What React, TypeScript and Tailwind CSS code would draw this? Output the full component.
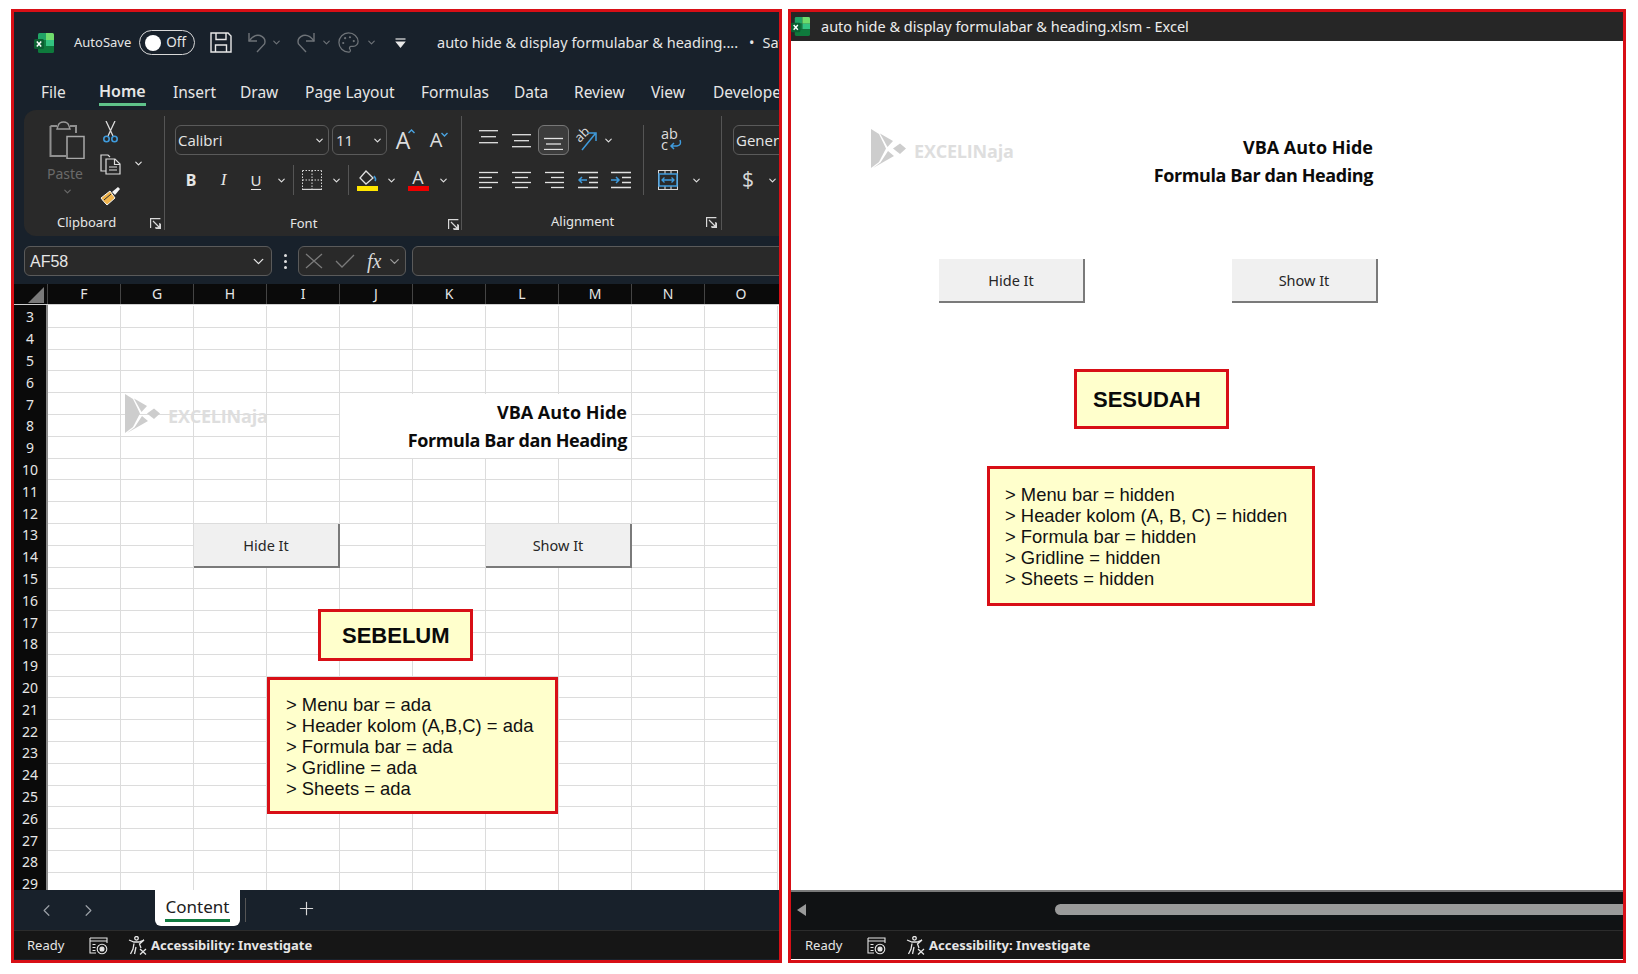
import { ChevronDown, ChevronLeft, ChevronRight, Plus, Palette } from "lucide-react";
import type { ReactNode } from "react";

const COLUMNS = ["F", "G", "H", "I", "J", "K", "L", "M", "N", "O"];
const ROWS = Array.from({ length: 27 }, (_, i) => i + 3);
const MENU = [
  { label: "File", w: "w-[58px]" },
  { label: "Home", w: "w-[74px]" },
  { label: "Insert", w: "w-[67px]" },
  { label: "Draw", w: "w-[65px]" },
  { label: "Page Layout", w: "w-[116px]" },
  { label: "Formulas", w: "w-[93px]" },
  { label: "Data", w: "w-[60px]" },
  { label: "Review", w: "w-[77px]" },
  { label: "View", w: "w-[62px]" },
  { label: "Developer", w: "w-[100px]" },
];

function Chev({ w = "w-[16px]", className = "text-[#e0e0e0]" }: { w?: string; className?: string }) {
  return (
    <div className={`${w} flex shrink-0 justify-center ${className}`}>
      <ChevronDown size={11} strokeWidth={2.5} />
    </div>
  );
}

function Slot({ w, children }: { w: string; children: ReactNode }) {
  return <div className={`${w} flex h-full shrink-0 items-center justify-center`}>{children}</div>;
}

function Sep({ w }: { w: string }) {
  return (
    <div className={`${w} flex shrink-0 justify-center`}>
      <div className="h-[30px] w-px bg-[#555555]" />
    </div>
  );
}

function ExcelLogo({ size = 20 }: { size?: number }) {
  return (
    <svg width={size} height={size} viewBox="0 0 20 20">
      <path d="M4 1.5 Q4 0 5.5 0 H12 V7 H4 Z" fill="#21a366" />
      <path d="M12 0 H18.5 Q20 0 20 1.5 V7 H12 Z" fill="#6fdc6c" />
      <path d="M4 7 H12 V13 H4 Z" fill="#107c41" />
      <path d="M12 7 H20 V13 H12 Z" fill="#33c481" />
      <path d="M4 13 H20 V18.5 Q20 20 18.5 20 H5.5 Q4 20 4 18.5 Z" fill="#0e7a3c" />
      <rect x="0" y="6" width="10" height="10" rx="1.5" fill="#0b5f31" />
      <path d="M2.8 8.5 L7.2 13.5 M7.2 8.5 L2.8 13.5" stroke="#ffffff" strokeWidth="1.5" />
    </svg>
  );
}

function SaveIcon() {
  return (
    <svg width="22" height="21" viewBox="0 0 22 21" fill="none" stroke="#e8e8e8" strokeWidth="1.4">
      <path d="M1 1 H18 L21 4 V20 H1 Z" />
      <path d="M6 1 V7.5 H16 V1" />
      <path d="M5.5 20 V13 H16.5 V20" />
    </svg>
  );
}

function UndoIcon({ flip }: { flip?: boolean }) {
  return (
    <svg className={flip ? "-scale-x-100" : ""} width="20" height="21" viewBox="0 0 20 21" fill="none" stroke="#6e7378" strokeWidth="1.4">
      <path d="M2 1 V9 H10" />
      <path d="M2 9 Q7 2 13 3.5 Q19.5 6 17.5 12 L10 20" />
    </svg>
  );
}

function CustomizeIcon() {
  return (
    <svg width="11" height="10" viewBox="0 0 11 10" fill="none" stroke="#e8e8e8" strokeWidth="1.2">
      <path d="M0.5 1 H10.5" />
      <path d="M1.5 4 H9.5 L5.5 9 Z" fill="#e8e8e8" />
    </svg>
  );
}

function PasteIcon() {
  return (
    <svg width="36" height="38" viewBox="0 0 36 38" fill="none">
      <path d="M1.5 5 H8 M21 5 H27 V12 M1.5 5 V35 H17" stroke="#8f8f8f" strokeWidth="2" />
      <path d="M9 5 Q10 1 14.5 1 Q19 1 20 5 L21 8 H8 Z" stroke="#9a9a9a" strokeWidth="1.4" />
      <rect x="18" y="15.5" width="17" height="22" fill="#292929" stroke="#a8a8a8" strokeWidth="1.5" />
    </svg>
  );
}

function ScissorsIcon() {
  return (
    <svg width="15" height="22" viewBox="0 0 15 22" fill="none">
      <path d="M3 0 L10 15 M12 0 L5 15" stroke="#dcdcdc" strokeWidth="1.3" />
      <circle cx="3.5" cy="18" r="2.7" stroke="#3f9bdc" strokeWidth="1.6" />
      <circle cx="11.5" cy="18" r="2.7" stroke="#3f9bdc" strokeWidth="1.6" />
    </svg>
  );
}

function CopyIcon() {
  return (
    <svg width="21" height="21" viewBox="0 0 21 21" fill="none" stroke="#dcdcdc" strokeWidth="1.2">
      <path d="M7 17 H1 V1 H8 L10 3" />
      <path d="M6 5 H15 L20 10 V20 H6 Z" fill="#292929" />
      <path d="M14.5 5 V10.5 H20 M9 13 H17 M9 16 H17" />
    </svg>
  );
}

function PainterIcon() {
  return (
    <svg width="21" height="20" viewBox="0 0 21 20" fill="none">
      <path d="M1 12 L10 5 L15 12 L7 19 Q3 15 1 12 Z" fill="#f0b44c" stroke="#f4f4f4" strokeWidth="1" />
      <path d="M4 14 L11 8" stroke="#292929" strokeWidth="1" />
      <path d="M12 6 L18 1 L20 3 L15 9 Z" fill="#f4f4f4" />
    </svg>
  );
}

function Launcher() {
  return (
    <svg width="11" height="11" viewBox="0 0 11 11" fill="none" stroke="#d8d8d8" strokeWidth="1.2">
      <path d="M0.6 10 V0.6 H10.4" />
      <path d="M3 3 L9.5 9.5 M9.8 5 V9.8 H5" />
      <path d="M10.4 6 V10.4 H6" />
    </svg>
  );
}

function GrowFont({ up }: { up: boolean }) {
  return (
    <div className="relative flex w-[20px] items-center justify-center">
      <span className={`font-['Open_Sans',sans-serif] text-[#dddddd] ${up ? "text-[23px]" : "text-[20px]"}`}>A</span>
      <svg className={`absolute right-[-2px] ${up ? "top-[6px]" : "top-[7px]"}`} width="7" height="5" viewBox="0 0 7 5" fill="none" stroke="#4aa3e0" strokeWidth="1.4">
        <path d={up ? "M0.5 4 L3.5 1 L6.5 4" : "M0.5 1 L3.5 4 L6.5 1"} />
      </svg>
    </div>
  );
}

function BorderIcon() {
  return (
    <svg width="20" height="20" viewBox="0 0 20 20" fill="none" stroke="#d8d8d8" strokeWidth="1" strokeDasharray="1.5 1.5">
      <path d="M0.5 0.5 H19.5 M0.5 0.5 V19.5 M19.5 0.5 V19.5 M10 0.5 V19.5 M0.5 10 H19.5" />
      <path d="M0 19.5 H20" strokeDasharray="none" strokeWidth="1.4" />
    </svg>
  );
}

function FillIcon() {
  return (
    <svg width="21" height="21" viewBox="0 0 21 21" fill="none">
      <path d="M9 1 L16 8 L9 14 L3 8 Z" stroke="#e0e0e0" strokeWidth="1.3" />
      <path d="M17 6 Q19.5 9 18 11" stroke="#3f9bdc" strokeWidth="1.6" />
      <rect x="0" y="16" width="21" height="5" fill="#ffe600" />
    </svg>
  );
}

function FontColorIcon() {
  return (
    <div className="flex flex-col items-center">
      <span className="font-['Open_Sans',sans-serif] text-[18px] leading-[17px] text-[#dddddd]">A</span>
      <div className="h-[5px] w-[21px] bg-[#ee0000]" />
    </div>
  );
}

// horizontal text-line icons for the alignment buttons, x ranges in 0..20
function Lines({ rows, y = 1, gap = 6 }: { rows: [number, number][]; y?: number; gap?: number }) {
  return (
    <svg width="20" height="20" viewBox="0 0 20 20" fill="none" stroke="#e2e2e2" strokeWidth="1.3">
      {rows.map(([from, to], i) => (
        <path key={i} d={`M${from} ${y + i * gap} H${to}`} />
      ))}
    </svg>
  );
}

function IndentIcon({ flip }: { flip?: boolean }) {
  return (
    <svg width="20" height="20" viewBox="0 0 20 20" fill="none" stroke="#e2e2e2" strokeWidth="1.3">
      <path d="M0 2.5 H20 M0 17.5 H20 M11 7.5 H20 M11 12.5 H20" />
      <path d={flip ? "M1 10 H9 M4 7 L1 10 L4 13" : "M0 10 H8 M5 7 L8 10 L5 13"} stroke="#3f9bdc" strokeWidth="1.5" />
    </svg>
  );
}

function OrientIcon() {
  return (
    <div className="relative h-[22px] w-[22px]">
      <span className="absolute left-[-1px] top-[-2px] -rotate-45 font-['Open_Sans',sans-serif] text-[13px] leading-[14px] text-[#dcdcdc]">ab</span>
      <svg className="absolute left-0 top-0" width="22" height="22" viewBox="0 0 22 22" fill="none">
        <path d="M7 21 L20 5 M13 4 H21 V12" stroke="#3f9bdc" strokeWidth="1.5" />
      </svg>
    </div>
  );
}

function WrapIcon() {
  return (
    <div className="relative flex h-[22px] w-[20px] flex-col font-['Open_Sans',sans-serif] text-[14.5px] leading-[10.5px] text-[#dddddd]">
      <span>ab</span>
      <span>c</span>
      <svg className="absolute bottom-[1px] right-[-1px]" width="13" height="11" viewBox="0 0 13 11" fill="none" stroke="#3f9bdc" strokeWidth="1.5">
        <path d="M11 1 Q13 6 8 7 H2 M5 4 L2 7 L5 10" />
      </svg>
    </div>
  );
}

function MergeIcon() {
  return (
    <svg className="shrink-0" width="20" height="20" viewBox="0 0 20 20" fill="none" stroke="#d8d8d8" strokeWidth="1.1">
      <path d="M0.5 0.5 H19.5 V19.5 H0.5 Z M7 0.5 V4 M13 0.5 V4 M7 16 V19.5 M13 16 V19.5" />
      <rect x="1" y="4" width="18" height="12" stroke="#3f9bdc" strokeWidth="1.5" />
      <path d="M4 10 H16 M6.5 7.5 L4 10 L6.5 12.5 M13.5 7.5 L16 10 L13.5 12.5" stroke="#3f9bdc" strokeWidth="1.3" />
    </svg>
  );
}

function StatusMacroIcon() {
  return (
    <svg width="19" height="18" viewBox="0 0 19 18" fill="none" stroke="#e6e6e6" strokeWidth="1.1">
      <path d="M1 1 H18 V6 M1 1 V16 H7 M1 4 H18" />
      <path d="M3.5 7.5 H6.5 M3.5 10.5 H6.5 M3.5 13.5 H6.5" />
      <circle cx="13" cy="12" r="4.8" />
      <circle cx="13" cy="12" r="2" fill="#e6e6e6" />
    </svg>
  );
}

function AccessIcon() {
  return (
    <svg width="20" height="19" viewBox="0 0 20 19" fill="none" stroke="#e6e6e6" strokeWidth="1.3">
      <circle cx="8.5" cy="2.3" r="1.8" />
      <path d="M1 4 L6 6 H11 L16 4 L11.5 8 L13 12 M6 7.5 L5 13 L2.5 18 M8 11 L6.5 18" />
      <path d="M12 13 L18 18.5 M18 13 L12 18.5" />
    </svg>
  );
}

function LogoMark() {
  return (
    <svg width="36" height="39" viewBox="0 0 36 39" fill="#cdcdcd">
      <path d="M0 0 L8 5 L15 19.5 L8 33 L0 39 Z" />
      <path d="M9 4.5 L22 12 L16.5 18 Z" />
      <path d="M9.5 33.5 L17 22 L23 27 L2 39 Z" />
      <path d="M22 19.5 L29 14.5 L35 19.5 L29 25 Z" />
    </svg>
  );
}

function StatusBar({ left }: { left: string }) {
  return (
    <div className={`flex h-[29px] shrink-0 items-center border-t border-[#2c2c2c] bg-[#161616] pt-[1px] text-[13px] text-[#e6e6e6] ${left}`}>
      <span className="w-[62px] font-['Noto_Sans',sans-serif]">Ready</span>
      <StatusMacroIcon />
      <div className="ml-[20px]">
        <AccessIcon />
      </div>
      <span className="ml-[3px] font-['Noto_Sans',sans-serif] text-[13px] font-bold">Accessibility: Investigate</span>
    </div>
  );
}

function ShapeButton({ label, className }: { label: string; className: string }) {
  return (
    <div className={`absolute flex h-[44px] w-[146px] items-center justify-center border-r-2 border-b-2 border-[#7a7a7a] bg-[#f0f0f0] pt-[1px] font-['Noto_Sans',sans-serif] text-[14.5px] text-[#262626] ${className}`}>
      {label}
    </div>
  );
}

function Heading({ className }: { className: string }) {
  return (
    <div className={`absolute text-right font-['Open_Sans',sans-serif] text-[18px] font-bold leading-[28px] text-[#0b0b0b] ${className}`}>
      <div>VBA Auto Hide</div>
      <div className="tracking-[-0.4px]">Formula Bar dan Heading</div>
    </div>
  );
}

function Watermark({ className }: { className: string }) {
  return (
    <div className={`absolute flex items-center ${className}`}>
      <LogoMark />
      <span className="ml-[7px] mt-[6px] font-['Open_Sans',sans-serif] text-[18px] font-bold tracking-[-0.2px] text-[#dedede]">EXCELINaja</span>
    </div>
  );
}

function NoteBox({ lines, className }: { lines: string[]; className: string }) {
  return (
    <div className={`absolute border-[3px] border-[#d80f16] bg-[#ffffcc] font-['Liberation_Sans',sans-serif] text-[18.4px] leading-[21px] text-[#111111] ${className}`}>
      {lines.map((line) => (
        <div key={line} className="whitespace-pre">
          {line}
        </div>
      ))}
    </div>
  );
}

function TagBox({ label, className }: { label: string; className: string }) {
  return (
    <div className={`absolute flex items-center border-[3px] border-[#d80f16] bg-[#ffffcc] font-['Liberation_Sans',sans-serif] text-[22px] font-bold text-[#0a0a0a] ${className}`}>
      {label}
    </div>
  );
}

function Ribbon() {
  return (
    <div className="ml-[10px] flex h-[126px] w-[800px] shrink-0 rounded-l-[12px] bg-[#292929] text-[#e6e6e6]">
      {/* clipboard */}
      <div className="my-[6px] flex h-[114px] w-[141px] shrink-0 flex-col border-r border-[#555555] pt-[5px]">
        <div className="flex h-[90px]">
          <div className="ml-[21px] flex w-[44px] flex-col items-center">
            <PasteIcon />
            <span className="mt-[5px] -translate-x-[2px] font-['Noto_Sans',sans-serif] text-[14px] leading-[20px] text-[#6a6a6a]">Paste</span>
            <ChevronDown size={11} strokeWidth={2.5} className="mt-[2px] text-[#6a6a6a]" />
          </div>
          <div className="ml-[9px] flex w-[24px] flex-col items-center">
            <ScissorsIcon />
            <div className="mt-[11px]">
              <CopyIcon />
            </div>
            <div className="mt-[11px]">
              <PainterIcon />
            </div>
          </div>
          <div className="ml-[11px] mt-[37px]">
            <ChevronDown size={11} strokeWidth={2.5} />
          </div>
        </div>
        <div className="mt-[8px] flex h-[18px] items-center font-['Noto_Sans',sans-serif] text-[13px]">
          <span className="ml-[33px] w-[93px]">Clipboard</span>
          <Launcher />
        </div>
      </div>
      {/* font */}
      <div className="my-[6px] flex h-[114px] w-[297px] shrink-0 flex-col border-r border-[#555555] pl-[10px] pt-[9px]">
        <div className="flex h-[30px] items-center">
          <div className="flex h-[30px] w-[154px] items-center justify-between rounded-[6px] border border-[#5a5a5a] pl-[2px] pr-[1px] font-['Open_Sans',sans-serif] text-[15px]">
            Calibri
            <Chev />
          </div>
          <div className="ml-[3px] flex h-[30px] w-[55px] items-center justify-between rounded-[6px] border border-[#5a5a5a] pl-[3px] pr-[1px] font-['Open_Sans',sans-serif] text-[15px]">
            11
            <Chev />
          </div>
          <div className="ml-[6px]">
            <GrowFont up />
          </div>
          <div className="ml-[13px]">
            <GrowFont up={false} />
          </div>
        </div>
        <div className="mt-[10px] flex h-[30px] items-center">
          <Slot w="w-[32px]">
            <span className="font-['Noto_Sans',sans-serif] text-[16px] font-bold">B</span>
          </Slot>
          <Slot w="w-[33px]">
            <span className="font-['Liberation_Serif',serif] text-[17px] italic">I</span>
          </Slot>
          <Slot w="w-[32px]">
            <span className="border-b border-[#e6e6e6] font-['Noto_Sans',sans-serif] text-[15px] leading-[18px]">U</span>
          </Slot>
          <Chev w="w-[18px]" />
          <Sep w="w-[6px]" />
          <Slot w="w-[32px]">
            <BorderIcon />
          </Slot>
          <Chev />
          <Sep w="w-[8px]" />
          <Slot w="w-[30px]">
            <FillIcon />
          </Slot>
          <Chev w="w-[18px]" />
          <Slot w="w-[36px]">
            <FontColorIcon />
          </Slot>
          <Chev w="w-[14px]" />
        </div>
        <div className="mt-[20px] flex h-[18px] items-center font-['Noto_Sans',sans-serif] text-[13px]">
          <span className="ml-[115px] w-[158px]">Font</span>
          <Launcher />
        </div>
      </div>
      {/* alignment */}
      <div className="my-[6px] flex h-[114px] w-[260px] shrink-0 flex-col border-r border-[#555555] pt-[9px]">
        <div className="flex h-[81px]">
          <div className="ml-[10px] flex w-[172px] shrink-0 flex-col border-r border-[#555555]">
            <div className="flex h-[30px] items-center">
              <Slot w="w-[33px]">
                <Lines rows={[[0, 19], [2, 17], [0, 19]]} y={0.7} />
              </Slot>
              <Slot w="w-[33px]">
                <Lines rows={[[0, 19], [2, 17], [0, 19]]} y={4.7} />
              </Slot>
              <div className="flex h-[30px] w-[31px] shrink-0 items-center justify-center rounded-[6px] border border-[#777777] bg-[#3c3c3c]">
                <Lines rows={[[0, 19], [2, 17], [0, 19]]} y={8.5} gap={5.5} />
              </div>
              <Slot w="w-[33px]">
                <OrientIcon />
              </Slot>
              <Chev w="w-[12px]" />
            </div>
            <div className="mt-[10px] flex h-[30px] items-center">
              <Slot w="w-[33px]">
                <Lines rows={[[0, 19], [0, 13], [0, 19], [0, 13]]} y={2.5} gap={5} />
              </Slot>
              <Slot w="w-[33px]">
                <Lines rows={[[0, 19], [3, 16], [0, 19], [3, 16]]} y={2.5} gap={5} />
              </Slot>
              <Slot w="w-[33px]">
                <Lines rows={[[0, 19], [6, 19], [0, 19], [6, 19]]} y={2.5} gap={5} />
              </Slot>
              <Slot w="w-[33px]">
                <IndentIcon flip />
              </Slot>
              <Slot w="w-[33px]">
                <IndentIcon />
              </Slot>
            </div>
          </div>
          <div className="flex w-[70px] flex-col">
            <div className="flex h-[30px] items-center pl-[17px]">
              <WrapIcon />
            </div>
            <div className="mt-[10px] flex h-[30px] items-center pl-[14px]">
              <MergeIcon />
              <Chev w="w-[36px]" />
            </div>
          </div>
        </div>
        <div className="mt-[18px] flex h-[18px] items-center font-['Noto_Sans',sans-serif] text-[13px]">
          <span className="ml-[89px] w-[155px]">Alignment</span>
          <Launcher />
        </div>
      </div>
      {/* number */}
      <div className="flex flex-col pl-[11px] pt-[15px]">
        <div className="flex h-[30px] w-[100px] items-center rounded-[6px] border border-[#5a5a5a] pl-[2px] font-['Open_Sans',sans-serif] text-[15px]">General</div>
        <div className="mt-[10px] flex h-[30px] items-center pl-[9px]">
          <span className="font-['Open_Sans',sans-serif] text-[21px] text-[#d8d8d8]">$</span>
          <Chev w="w-[36px]" />
        </div>
      </div>
    </div>
  );
}

function BeforeWindow() {
  return (
    <div className="flex h-[954px] w-[771px] shrink-0 flex-col overflow-hidden border-[3px] border-[#d80f16] bg-[#18212b] text-[#e6e6e6]">
      <div className="flex h-[60px] shrink-0 items-center whitespace-nowrap pt-[1px] text-[14px] [&>*]:shrink-0">
        <div className="ml-[20px]">
          <ExcelLogo />
        </div>
        <span className="ml-[20px] w-[65px] font-['Noto_Sans',sans-serif] text-[13px]">AutoSave</span>
        <div className="flex h-[25px] w-[56px] items-center justify-between rounded-full border-[1.5px] border-[#d8d8d8] pl-[5px] pr-[8px]">
          <div className="size-[16px] rounded-full bg-white" />
          <span className="font-['Noto_Sans',sans-serif] text-[13.5px]">Off</span>
        </div>
        <div className="ml-[15px]">
          <SaveIcon />
        </div>
        <div className="ml-[15px]">
          <UndoIcon />
        </div>
        <Chev w="w-[18px]" className="text-[#6e7378]" />
        <div className="ml-[11px]">
          <UndoIcon flip />
        </div>
        <Chev w="w-[20px]" className="text-[#6e7378]" />
        <Palette className="ml-[1px] text-[#6e7378]" size={23} strokeWidth={1.3} />
        <Chev w="w-[20px]" className="ml-[1px] text-[#6e7378]" />
        <div className="ml-[14px]">
          <CustomizeIcon />
        </div>
        <span className="ml-[31px] font-['Noto_Sans',sans-serif] text-[14.5px]">auto hide &amp; display formulabar &amp; heading....</span>
        <span className="ml-[11px] font-['Noto_Sans',sans-serif] text-[14.5px]">•</span>
        <span className="ml-[8px] font-['Noto_Sans',sans-serif] text-[14.5px]">Saved</span>
      </div>
      <div className="flex h-[38px] shrink-0 items-center whitespace-nowrap pl-[27px] pt-[3px] font-['Noto_Sans',sans-serif] text-[15.5px]">
        {MENU.map((item) =>
          item.label === "Home" ? (
            <div key={item.label} className={`${item.w} shrink-0`}>
              <span className="inline-block border-b-[3px] border-[#5fc28a] pb-[1px] text-[16px] font-semibold leading-[22px]">{item.label}</span>
            </div>
          ) : (
            <div key={item.label} className={`${item.w} shrink-0`}>
              {item.label}
            </div>
          ),
        )}
      </div>
      <Ribbon />
      <div className="mt-[10px] flex h-[30px] shrink-0 items-center pl-[10px]">
        <div className="flex h-[30px] w-[248px] shrink-0 items-center justify-between rounded-[6px] border border-[#5a5a5a] bg-[#292929] pl-[5px] pr-[4px] pt-[1px] font-['Liberation_Sans',sans-serif] text-[16px]">
          AF58
          <ChevronDown size={17} strokeWidth={1.8} />
        </div>
        <div className="flex w-[26px] shrink-0 flex-col items-center gap-[3px]">
          <div className="size-[3px] rounded-full bg-[#e0e0e0]" />
          <div className="size-[3px] rounded-full bg-[#e0e0e0]" />
          <div className="size-[3px] rounded-full bg-[#e0e0e0]" />
        </div>
        <div className="flex h-[30px] w-[108px] shrink-0 items-center rounded-[6px] border border-[#5a5a5a] bg-[#292929] pl-[6px]">
          <svg width="18" height="16" viewBox="0 0 18 16" fill="none" stroke="#7a7a7a" strokeWidth="1.3">
            <path d="M1 1 L17 15 M17 1 L1 15" />
          </svg>
          <svg className="ml-[12px]" width="20" height="14" viewBox="0 0 20 14" fill="none" stroke="#7a7a7a" strokeWidth="1.3">
            <path d="M1 7 L7 13 L19 1" />
          </svg>
          <span className="ml-[12px] w-[20px] font-['Liberation_Serif',serif] text-[20px] italic text-[#d8d8d8]">fx</span>
          <ChevronDown size={15} className="text-[#9a9a9a]" />
        </div>
        <div className="ml-[6px] h-[30px] w-[400px] shrink-0 rounded-[6px] border border-[#5a5a5a] bg-[#292929]" />
      </div>
      <div className="mt-[8px] flex h-[21px] shrink-0 border-b border-[#d0d0d0] bg-[#0a0a0a] font-['Noto_Sans',sans-serif] text-[14px]">
        <div className="flex w-[33px] shrink-0 items-end justify-end pb-[1px] pr-[3px]">
          <div className="h-0 w-0 border-b-[16px] border-l-[16px] border-b-[#7a7a7a] border-l-transparent" />
        </div>
        {COLUMNS.map((col) => (
          <div key={col} className="flex w-[73px] shrink-0 items-center justify-center border-l border-[#444444] leading-none">
            {col}
          </div>
        ))}
      </div>
      <div className="relative flex h-[585px] shrink-0 overflow-hidden bg-white">
        <div className="w-[34px] shrink-0 border-r-2 border-[#8a8a8a] bg-[#0a0a0a] pt-[1px]">
          {ROWS.map((row) => (
            <div key={row} className="flex h-[21.8px] items-center justify-center font-['Noto_Sans',sans-serif] text-[14px] text-[#e6e6e6]">
              {row}
            </div>
          ))}
        </div>
        <div className="grid grid-cols-[repeat(10,73px)] auto-rows-[21.8px] pt-[1px]">
          {ROWS.flatMap((row) => COLUMNS.map((col) => <div key={`${col}${row}`} className="border-r border-b border-[#dcdcdc]" />))}
        </div>
        {/* floating shapes on the sheet, offsets are from the sheet's top left */}
        <div className="absolute left-[326px] top-[89px] h-[64px] w-[291px] bg-white" />
        <Watermark className="left-[111px] top-[89px]" />
        <Heading className="right-[152px] top-[93px]" />
        <ShapeButton label="Hide It" className="left-[180px] top-[219px]" />
        <ShapeButton label="Show It" className="left-[472px] top-[219px]" />
        <TagBox label="SEBELUM" className="left-[304px] top-[304px] h-[52px] w-[155px] pl-[21px]" />
        <NoteBox
          className="left-[253px] top-[372px] h-[137px] w-[291px] pl-[16px] pt-[14px]"
          lines={["> Menu bar = ada", "> Header kolom (A,B,C) = ada", "> Formula bar = ada", "> Gridline = ada", "> Sheets = ada"]}
        />
      </div>
      <div className="flex h-[40px] shrink-0 items-start">
        <div className="flex h-[40px] w-[141px] shrink-0 items-center gap-[23px] pl-[23px] text-[#9aa0a6]">
          <ChevronLeft size={19} strokeWidth={1.5} />
          <ChevronRight size={19} strokeWidth={1.5} />
        </div>
        <div className="flex h-[36px] w-[85px] shrink-0 flex-col items-center rounded-b-[6px] bg-white pt-[5px] font-['Noto_Sans',sans-serif] text-[17px] leading-[23px] text-[#202020]">
          <span>Content</span>
          <div className="mt-[1px] h-[3px] w-[65px] bg-[#107c41]" />
        </div>
        <div className="ml-[5px] mt-[8px] h-[24px] w-px bg-[#555555]" />
        <Plus className="ml-[50px] mt-[8px] text-[#d8d8d8]" size={21} strokeWidth={1.3} />
      </div>
      <StatusBar left="pl-[13px]" />
    </div>
  );
}

function AfterWindow() {
  return (
    <div className="flex h-[954px] w-[838px] shrink-0 flex-col overflow-hidden border-[3px] border-[#d80f16] bg-white">
      <div className="flex h-[29px] shrink-0 items-center bg-[#262626] text-[#ededed]">
        <ExcelLogo size={19} />
        <span className="ml-[11px] font-['Noto_Sans',sans-serif] text-[14.5px]">auto hide &amp; display formulabar &amp; heading.xlsm - Excel</span>
      </div>
      <div className="relative h-[849px] shrink-0 bg-white">
        <Watermark className="left-[80px] top-[88px]" />
        <Heading className="right-[250px] top-[92px]" />
        <ShapeButton label="Hide It" className="left-[148px] top-[218px]" />
        <ShapeButton label="Show It" className="left-[441px] top-[218px]" />
        <TagBox label="SESUDAH" className="left-[283px] top-[328px] h-[60px] w-[155px] pl-[16px]" />
        <NoteBox
          className="left-[196px] top-[425px] h-[140px] w-[328px] pl-[15px] pt-[15px]"
          lines={["> Menu bar = hidden", "> Header kolom (A, B, C) = hidden", "> Formula bar = hidden", "> Gridline = hidden", "> Sheets = hidden"]}
        />
      </div>
      <div className="flex h-[40px] shrink-0 items-center border-t-2 border-[#7a7a7a] bg-[#101214] pb-[3px] pl-[6px]">
        <div className="h-0 w-0 border-y-[6px] border-r-[9px] border-y-transparent border-r-[#9a9a9a]" />
        <div className="ml-[249px] h-[11px] flex-1 rounded-l-full bg-[#9a9a9a]" />
      </div>
      <StatusBar left="pl-[14px]" />
    </div>
  );
}

export default function App() {
  return (
    <div className="flex h-[974px] w-[1638px] items-start gap-[6px] overflow-hidden bg-white pl-[11px] pt-[9px]">
      <BeforeWindow />
      <AfterWindow />
    </div>
  );
}
